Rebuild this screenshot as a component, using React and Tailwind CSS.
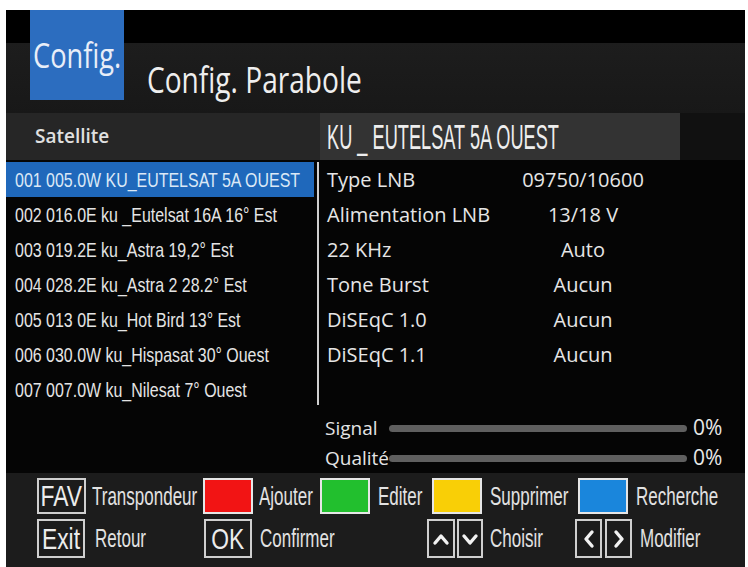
import React from "react";

const NARROW = "font-['Liberation_Sans_Narrow','Liberation_Sans','Arial',sans-serif]";
const OPEN = "font-['Open_Sans','Noto_Sans',sans-serif]";

const sats = [
  "001 005.0W KU_EUTELSAT 5A OUEST",
  "002 016.0E ku _Eutelsat 16A 16° Est",
  "003 019.2E ku_Astra 19,2° Est",
  "004 028.2E ku_Astra 2 28.2° Est",
  "005 013 0E ku_Hot Bird 13° Est",
  "006 030.0W ku_Hispasat 30° Ouest",
  "007 007.0W ku_Nilesat 7° Ouest",
];

const params = [
  ["Type LNB", "09750/10600"],
  ["Alimentation LNB", "13/18 V"],
  ["22 KHz", "Auto"],
  ["Tone Burst", "Aucun"],
  ["DiSEqC 1.0", "Aucun"],
  ["DiSEqC 1.1", "Aucun"],
];

function Label({ children, className = "" }) {
  return (
    <span
      className={`inline-block origin-left scale-x-[0.68] whitespace-nowrap text-[25px] leading-none text-[#e2e2e2] ${NARROW} ${className}`}
    >
      {children}
    </span>
  );
}

function KeyBox({ children, w }) {
  return (
    <div
      className={`flex h-full shrink-0 items-center justify-center border-2 border-[#cfcfcf] ${w}`}
    >
      {children}
    </div>
  );
}

function KeyText({ children }) {
  return (
    <span
      className={`inline-block scale-x-[0.76] whitespace-nowrap text-[30px] leading-none text-[#ececec] ${NARROW}`}
    >
      {children}
    </span>
  );
}

function Chevron({ dir }) {
  const pts = {
    up: "5,15 11,8 17,15",
    down: "5,8 11,15 17,8",
    left: "14,4 8,11 14,18",
    right: "8,4 14,11 8,18",
  }[dir];
  return (
    <svg width="22" height="22" viewBox="0 0 22 22">
      <polyline
        points={pts}
        fill="none"
        stroke="#f2f2f2"
        strokeWidth="3.4"
        strokeLinecap="round"
        strokeLinejoin="round"
      />
    </svg>
  );
}

function ColorBox({ color }) {
  return (
    <div className={`h-full w-[50px] shrink-0 border-2 border-[#e6e6e6] ${color}`} />
  );
}

export default function App() {
  return (
    <div className="h-[567px] w-[748px] overflow-hidden bg-white pl-[6px] pt-[10px]">
      <div className="flex h-[557px] w-[739px] flex-col overflow-hidden bg-[#050505] text-[#e6e6e6]">
        {/* Header */}
        <div className="flex h-[103px] shrink-0 items-start bg-[linear-gradient(to_bottom,#000_33px,#1d1d1d_33px,#181818_100%)]">
          <div className="ml-[24px] h-[90px] w-[94px] shrink-0 bg-[#2c6dbf]">
            <span
              className={`ml-[3px] mt-[28px] inline-block origin-left scale-x-[0.8] whitespace-nowrap text-[34px] leading-none text-[#e8eef8] ${OPEN}`}
            >
              Config.
            </span>
          </div>
          <span
            className={`ml-[23px] mt-[52px] inline-block origin-left scale-x-[0.78] whitespace-nowrap text-[36px] leading-none text-[#eeeeee] ${OPEN}`}
          >
            Config. Parabole
          </span>
        </div>

        {/* Column header row */}
        <div className="flex h-[47px] shrink-0 bg-[#141414]">
          <div className="flex w-[314px] items-center bg-[#262626] pl-[29px]">
            <span className={`text-[19px] font-semibold text-[#e0e0e0] ${OPEN}`}>
              Satellite
            </span>
          </div>
          <div className="flex w-[360px] items-center bg-[#333333] pl-[7px]">
            <span
              className={`inline-block origin-left scale-x-[0.52] whitespace-nowrap text-[35px] leading-none text-[#eeeeee] ${NARROW}`}
            >
              KU _ EUTELSAT 5A OUEST
            </span>
          </div>
          <div className="flex-1 bg-[#111111]" />
        </div>

        {/* Middle */}
        <div className="flex h-[313px] shrink-0">
          <div className="w-[308px] shrink-0 pt-[2px]">
            {sats.map((s, i) => (
              <div
                key={s}
                className={`flex h-[35px] items-center pl-[9px] ${
                  i === 0 ? "bg-[#1f68bb]" : ""
                }`}
              >
                <span
                  className={`inline-block origin-left scale-x-[0.76] whitespace-nowrap text-[21px] leading-none ${
                    i === 0 ? "text-[#dbe8f6]" : "text-[#e4e4e4]"
                  } ${NARROW}`}
                >
                  {s}
                </span>
              </div>
            ))}
          </div>

          <div className="flex flex-1 flex-col">
            <div className="flex h-[245px]">
              <div className="ml-[3px] mt-[2px] h-[243px] w-[2px] bg-[#cfcfcf]" />
              <div className="pl-[8px] pt-[2px]">
                {params.map(([k, v]) => (
                  <div key={k} className={`flex h-[35px] items-center text-[20px] ${OPEN}`}>
                    <span className="w-[176px] whitespace-nowrap text-[#e6e6e6]">{k}</span>
                    <span className="w-[160px] whitespace-nowrap text-center text-[#e6e6e6]">{v}</span>
                  </div>
                ))}
              </div>
            </div>

            <div className="mt-[8px] flex flex-col pl-[11px]">
              {["Signal", "Qualité"].map((l) => (
                <div key={l} className={`flex h-[30px] items-center ${OPEN}`}>
                  <span className="w-[64px] whitespace-nowrap text-[19px] text-[#e4e4e4]">{l}</span>
                  <div className="h-[7px] w-[298px] rounded-full bg-[#5f5f5f]" />
                  <span className="ml-[6px] text-[21px] text-[#e8e8e8]">0%</span>
                </div>
              ))}
            </div>
          </div>
        </div>

        {/* Footer */}
        <div className="flex flex-1 flex-col gap-[5px] bg-[#1c1c1c] pl-[31px] pt-[5px]">
          <div className="flex h-[36px] items-center">
            <div className="flex h-full w-[166px] items-center">
              <KeyBox w="w-[49px]">
                <KeyText>FAV</KeyText>
              </KeyBox>
              <Label className="ml-[6px]">Transpondeur</Label>
            </div>
            <div className="flex h-full w-[117px] items-center">
              <ColorBox color="bg-[#f21414]" />
              <Label className="ml-[6px]">Ajouter</Label>
            </div>
            <div className="flex h-full w-[112px] items-center">
              <ColorBox color="bg-[#22bf2e]" />
              <Label className="ml-[8px]">Editer</Label>
            </div>
            <div className="flex h-full w-[146px] items-center">
              <ColorBox color="bg-[#f9cf06]" />
              <Label className="ml-[8px]">Supprimer</Label>
            </div>
            <div className="flex h-full items-center">
              <ColorBox color="bg-[#1a86dc]" />
              <Label className="ml-[8px]">Recherche</Label>
            </div>
          </div>

          <div className="flex h-[39px] items-center">
            <div className="flex h-full w-[167px] items-center">
              <KeyBox w="w-[48px]">
                <KeyText>Exit</KeyText>
              </KeyBox>
              <Label className="ml-[10px]">Retour</Label>
            </div>
            <div className="flex h-full w-[223px] items-center">
              <KeyBox w="w-[48px]">
                <KeyText>OK</KeyText>
              </KeyBox>
              <Label className="ml-[8px]">Confirmer</Label>
            </div>
            <div className="flex h-full w-[148px] items-center">
              <KeyBox w="w-[28px]">
                <Chevron dir="up" />
              </KeyBox>
              <div className="ml-[2px] h-full">
                <KeyBox w="w-[26px]">
                  <Chevron dir="down" />
                </KeyBox>
              </div>
              <Label className="ml-[7px]">Choisir</Label>
            </div>
            <div className="flex h-full items-center">
              <KeyBox w="w-[27px]">
                <Chevron dir="left" />
              </KeyBox>
              <div className="ml-[3px] h-full">
                <KeyBox w="w-[27px]">
                  <Chevron dir="right" />
                </KeyBox>
              </div>
              <Label className="ml-[8px]">Modifier</Label>
            </div>
          </div>
        </div>
      </div>
    </div>
  );
}
